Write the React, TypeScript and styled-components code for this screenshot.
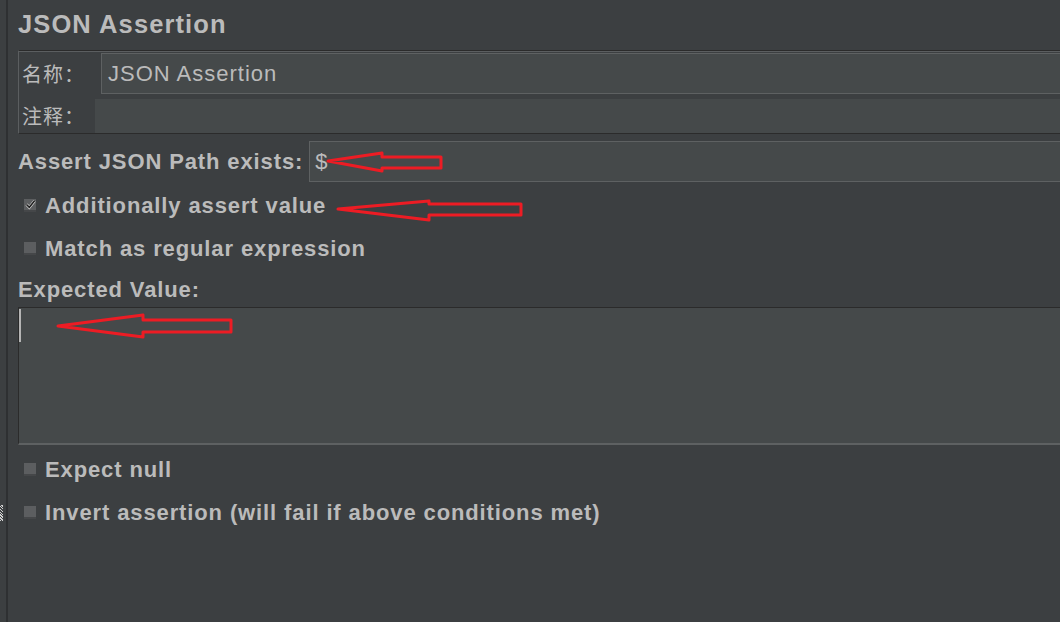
import React from "react";
import styled, { createGlobalStyle } from "styled-components";

const Global = createGlobalStyle`
  html, body { margin: 0; padding: 0; background: #3c3f41; }
  #root { width: 1060px; height: 622px; overflow: hidden; }
`;

const Page = styled.div`
  position: relative;
  display: flex;
  width: 1060px;
  height: 622px;
  overflow: hidden;
  background: #3c3f41;
  font-family: "Liberation Sans", Arial, sans-serif;
  color: #bbbbbb;
`;

const LeftStrip = styled.div`
  width: 6px;
  flex: none;
  display: flex;
  flex-direction: column;
  padding-top: 505px;
  box-sizing: border-box;
`;

const Grip = styled.div`
  width: 3px;
  height: 16px;
  background-image: repeating-linear-gradient(
    45deg,
    #d0d0d0 0 1px,
    #3c3f41 1px 2px
  );
`;

const Divider = styled.div`
  width: 2px;
  flex: none;
  background: #2e3032;
`;

const Main = styled.div`
  flex: 1;
  display: flex;
  flex-direction: column;
  padding-left: 10px;
  margin-right: -40px;
`;

const Title = styled.h1`
  margin: 0;
  height: 50px;
  line-height: 48px;
  font-size: 25.5px;
  letter-spacing: 1.1px;
  font-weight: bold;
  color: #bbbbbb;
`;

const NamePanel = styled.div`
  display: flex;
  flex-direction: column;
  gap: 5px;
  padding: 2px 0 0 3px;
  border: 1px solid #5b5e60;
  border-top-color: #2b2b2b;
  border-bottom-color: #2b2b2b;
  box-shadow: inset 0 1px 0 #5b5e60;
`;

const PanelRow = styled.div<{ $h: number }>`
  display: flex;
  align-items: center;
  height: ${(p) => p.$h}px;
`;

const CnLabel = styled.span<{ $w: number }>`
  width: ${(p) => p.$w}px;
  flex: none;
  font-family: "Noto Sans CJK SC", sans-serif;
  font-size: 20px;
  letter-spacing: 1px;
  color: #bbbbbb;
  line-height: 1;
`;

const Field = styled.div`
  flex: 1;
  align-self: stretch;
  display: flex;
  align-items: center;
  background: #45494a;
  border: 1px solid #5e6162;
  box-sizing: border-box;
  padding-left: 6px;
  font-size: 22px;
  letter-spacing: 1px;
  color: #bbbbbb;
`;

const CommentField = styled.div`
  flex: 1;
  align-self: stretch;
  background: #45494a;
`;

const AssertRow = styled.div`
  display: flex;
  align-items: center;
  margin-top: 7px;
  height: 41px;
`;

const BoldLabel = styled.span`
  font-size: 22px;
  letter-spacing: 0.88px;
  font-weight: bold;
  color: #bbbbbb;
  white-space: nowrap;
`;

const AssertField = styled(Field)`
  margin-left: 6px;
  padding-left: 5px;
`;

const CheckRow = styled.label<{ $first?: boolean }>`
  display: flex;
  align-items: center;
  height: 43px;
  padding-left: 6px;
  gap: 9px;
  margin-top: ${(p) => (p.$first ? 2 : 0)}px;
`;

const Box = styled.span`
  width: 12px;
  height: 13px;
  flex: none;
  box-sizing: border-box;
  background: #5c5e60;
  border-bottom: 2px solid #454749;
  display: flex;
  align-items: center;
  justify-content: center;
`;

const SectionLabel = styled.div`
  height: 37px;
  display: flex;
  align-items: center;
  padding-top: 3px;
  box-sizing: border-box;
`;

const TextArea = styled.div`
  height: 138px;
  box-sizing: border-box;
  background: #45494a;
  border-top: 1px solid #2b2b2b;
  border-left: 1px solid #2b2b2b;
  border-bottom: 2px solid #5e6162;
  padding: 1px 0 0 0;
  margin-bottom: 3px;
`;

const Caret = styled.span`
  display: block;
  width: 2px;
  height: 33px;
  background: #b5b5b5;
`;

const Overlay = styled.svg`
  position: absolute;
  left: 0;
  top: 0;
  pointer-events: none;
`;

function CheckBox({ checked }: { checked?: boolean }) {
  return (
    <Box>
      {checked && (
        <svg width="11" height="11" viewBox="0 0 11 11">
          <path d="M1.5 5.5 L4.3 8.3 L9.6 1.8" fill="none" stroke="#d8d8d8" strokeWidth="2.8" />
          <path d="M1.5 5.5 L4.3 8.3 L9.6 1.8" fill="none" stroke="#1e1e1e" strokeWidth="1.5" />
        </svg>
      )}
    </Box>
  );
}

function arrowPoints(tipX: number, tipY: number, headX: number, headTop: number, headBot: number, shaftTop: number, shaftBot: number, endX: number) {
  return `${tipX},${tipY} ${headX},${headTop} ${headX},${shaftTop} ${endX},${shaftTop} ${endX},${shaftBot} ${headX},${shaftBot} ${headX},${headBot}`;
}

export default function App() {
  return (
    <>
      <Global />
      <Page>
        <LeftStrip>
          <Grip />
        </LeftStrip>
        <Divider />
        <Main>
          <Title>JSON Assertion</Title>
          <NamePanel>
            <PanelRow $h={41}>
              <CnLabel $w={79}>名称：</CnLabel>
              <Field>JSON Assertion</Field>
            </PanelRow>
            <PanelRow $h={34}>
              <CnLabel $w={73}>注释：</CnLabel>
              <CommentField />
            </PanelRow>
          </NamePanel>
          <AssertRow>
            <BoldLabel>Assert JSON Path exists:</BoldLabel>
            <AssertField>$</AssertField>
          </AssertRow>
          <CheckRow $first>
            <CheckBox checked />
            <BoldLabel>Additionally assert value</BoldLabel>
          </CheckRow>
          <CheckRow>
            <CheckBox />
            <BoldLabel>Match as regular expression</BoldLabel>
          </CheckRow>
          <SectionLabel>
            <BoldLabel>Expected Value:</BoldLabel>
          </SectionLabel>
          <TextArea>
            <Caret />
          </TextArea>
          <CheckRow>
            <CheckBox />
            <BoldLabel>Expect null</BoldLabel>
          </CheckRow>
          <CheckRow>
            <CheckBox />
            <BoldLabel>Invert assertion (will fail if above conditions met)</BoldLabel>
          </CheckRow>
        </Main>
        <Overlay width="1060" height="622" viewBox="0 0 1060 622">
          <g fill="none" stroke="#ed1c24" strokeWidth="3" strokeLinejoin="round">
            <polygon points={arrowPoints(328, 161, 382, 153, 171, 157, 168, 441)} />
            <polygon points={arrowPoints(338, 209, 429, 201, 220, 204, 215, 521)} />
            <polygon points={arrowPoints(58, 326, 143, 315, 337, 320, 332, 231)} />
          </g>
        </Overlay>
      </Page>
    </>
  );
}
